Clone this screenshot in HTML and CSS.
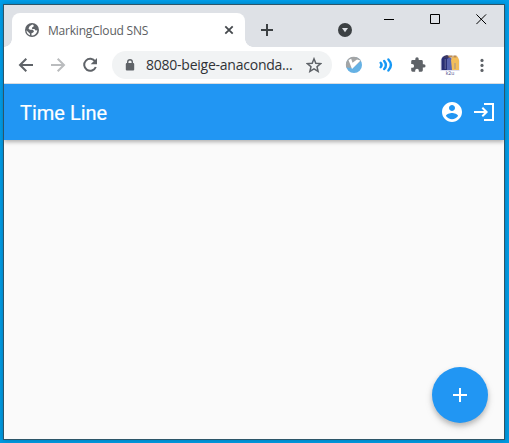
FILE: index.html
```html
<!DOCTYPE html>
<html lang="en">
<head>
<meta charset="utf-8">
<title>MarkingCloud SNS</title>
<link rel="stylesheet" href="styles.css">
</head>
<body>
<div class="window">
  <div class="tabstrip">
    <div class="tab">
      <svg class="favicon" width="16" height="16" viewBox="0 0 16 16"><circle cx="8" cy="8" r="7" fill="#5f6368"/><path d="M8.2 2.600 5.600 4.200 4.500 6.400l1.300 1.400h3l1.200 1.400-.8 1.300-1.700.7v2.300c3.200 0 5.700-2.400 5.800-5.300l-1.700.2-1.200-1.500H8.100V5.500l1.700-1.200-.3-1.200zM2.400 8.200c.1 2.600 1.500 4.400 3.600 5V11.800L4.700 10.400z" fill="#fff"/></svg>
      <span class="tab-title">MarkingCloud SNS</span>
      <svg class="tab-close" width="10" height="10" viewBox="0 0 10 10"><path d="m1.300 1.300 7.400 7.400m0-7.400L1.300 8.700" stroke="#45494d" stroke-width="1.800"/></svg>
      <i class="tab-foot tab-foot-left"></i>
      <i class="tab-foot tab-foot-right"></i>
    </div>
    <svg class="new-tab" width="12" height="12" viewBox="0 0 12 12"><path d="M6 0v12M0 6h12" stroke="#3c4043" stroke-width="2"/></svg>
    <svg class="tab-search" width="14" height="14" viewBox="0 0 14 14"><circle cx="7" cy="7" r="7" fill="#3c4043"/><path d="M4 5h6L7 9.300z" fill="#dee1e6"/></svg>
    <div class="controls">
      <svg width="11" height="11" viewBox="0 0 11 11"><path d="M0 5.500h10" stroke="#000"/></svg>
      <svg width="11" height="11" viewBox="0 0 11 11"><path d="M.5.500h9v9h-9z" fill="none" stroke="#000"/></svg>
      <svg width="11" height="11" viewBox="0 0 11 11"><path d="m.4.400 9.700 9.700m0-9.700L.4 10.100" stroke="#000"/></svg>
    </div>
  </div>
  <div class="toolbar">
    <div class="nav">
      <svg width="20" height="20" viewBox="0 0 20 20"><path d="M17 10H4m6.300-6.300L4 10l6.300 6.300" fill="none" stroke="#5f6368" stroke-width="2"/></svg>
      <svg width="20" height="20" viewBox="0 0 20 20"><path d="M3 10h13M9.700 3.700 16 10l-6.300 6.300" fill="none" stroke="#babcbe" stroke-width="2"/></svg>
      <svg width="20" height="20" viewBox="0 0 20 20"><path d="M15.200 6.500A6 6 0 1 0 15.800 12" fill="none" stroke="#5f6368" stroke-width="2"/><path d="M17 3v6.300h-6.300z" fill="#5f6368"/></svg>
    </div>
    <div class="omnibox">
      <svg width="10" height="12" viewBox="0 0 10 12"><path d="M2.700 5V3a2.300 2.300 0 0 1 4.600 0v2" fill="none" stroke="#5f6368" stroke-width="1.400"/><rect x=".8" y="4" width="8.400" height="7.500" rx="1" fill="#5f6368"/></svg>
      <span class="url">8080-beige-anaconda...</span>
      <svg width="16" height="16" viewBox="0 0 16 16"><path d="m8 1.800 1.800 4.400 4.800.4-3.600 3.100 1.100 4.600L8 11.800l-4.100 2.500L5 9.700 1.400 6.600l4.800-.4z" fill="none" stroke="#5f6368" stroke-width="1.500"/></svg>
    </div>
    <div class="extensions">
      <svg width="20" height="20" viewBox="0 0 20 20"><circle cx="10" cy="10" r="8" fill="#65b1e4"/><path d="M2 11a8 8 0 0 1 15-5L8.500 13 2.200 12.500z" fill="#a3a5a6"/><path d="m4.500 5 2.700-1.200 1.300 4L13 4.500l3.500 1L8 14z" fill="#fff"/></svg>
      <svg width="20" height="20" viewBox="0 0 20 20" fill="none" stroke="#1698f5" stroke-width="2.400" stroke-linecap="round"><path d="M4.600 7.800q2 2.200 0 4.400M8.200 5.900q3.400 4.100 0 8.200M12.400 4.500q5 5.500 0 11"/></svg>
      <svg width="20" height="20" viewBox="0 0 24 24"><path transform="translate(2.200 2) scale(.82)" d="M20.500 11H19V7a2 2 0 0 0-2-2h-4V3.500a2.500 2.500 0 0 0-5 0V5H4a2 2 0 0 0-2 2v3.800h1.500a2.700 2.700 0 0 1 0 5.400H2V20a2 2 0 0 0 2 2h3.800v-1.500a2.700 2.700 0 0 1 5.400 0V22H17a2 2 0 0 0 2-2v-4h1.500a2.500 2.500 0 0 0 0-5z" fill="#5f6368"/></svg>
      <div class="avatar">
        <svg width="20" height="17" viewBox="0 0 20 17"><path d="M.5 17V7q1-5 5-5.500h9q4 .5 5 5.500v10z" fill="#dedff0"/><path d="M1.500 16V5L3 2.500h7V16z" fill="#292e73"/><path d="M7 16V5l3-2 2 2v11z" fill="#5963ae"/><path d="M12 16 11 6l1.500-3.500h5L19 6v10z" fill="#f3bd59"/><path d="m4 2 3-1 2 1v2H4z" fill="#3d3862"/><path d="M8.500 1.500h4v2h-4zM13.500 1.500h3v2h-3z" fill="#bc8c52"/><path d="M5.200 5v10M15 9v6" stroke="#8083a8" stroke-width=".7"/></svg>
        <span>k2u</span>
      </div>
      <svg width="20" height="20" viewBox="0 0 20 20" fill="#5f6368"><circle cx="10" cy="5.400" r="1.600"/><circle cx="10" cy="10.400" r="1.600"/><circle cx="10" cy="15.400" r="1.600"/></svg>
    </div>
  </div>
  <header class="appbar">
    <h1>Time Line</h1>
    <svg width="24" height="24" viewBox="0 0 24 24"><path fill="#fff" d="M12 2C6.480 2 2 6.480 2 12s4.480 10 10 10 10-4.480 10-10S17.520 2 12 2zm0 3c1.660 0 3 1.340 3 3s-1.340 3-3 3-3-1.340-3-3 1.340-3 3-3zm0 14.200c-2.500 0-4.710-1.280-6-3.220.030-1.990 4-3.080 6-3.080 1.990 0 5.970 1.090 6 3.080-1.290 1.940-3.500 3.220-6 3.220z"/></svg>
    <svg width="24" height="24" viewBox="0 0 24 24"><path d="M12 4h9v16h-9M2 12h13M10.300 7.700 14.600 12l-4.300 4.300" fill="none" stroke="#fff" stroke-width="2"/></svg>
  </header>
  <main class="content">
    <button class="fab" aria-label="Add"><svg width="24" height="24" viewBox="0 0 24 24"><path d="M12 5v14M5 12h14" stroke="#fff" stroke-width="2"/></svg></button>
  </main>
</div>
</body>
</html>
```

FILE: styles.css
```css
* { box-sizing: border-box; }
body {
  margin: 0;
  height: 443px;
  padding: 4px 4px 3px 3px;
  background: linear-gradient(#009fea, #009be2);
  overflow: hidden;
}
svg { display: block; flex: none; }
.window {
  display: flex;
  flex-direction: column;
  width: 502px;
  height: 436px;
  border: 1px solid #2d5568;
  background: #fafafa;
  box-shadow: 0 0 5px rgba(0, 35, 65, .3);
}
.tabstrip {
  display: flex;
  height: 42px;
  background: #dee1e6;
}
.tab {
  position: relative;
  display: flex;
  align-items: center;
  width: 233px;
  height: 34px;
  margin: 8px 0 0 8px;
  padding: 0 11px 0 12px;
  border-radius: 8px 8px 0 0;
  background: #fff;
}
.tab-foot {
  position: absolute;
  bottom: 0;
  width: 8px;
  height: 8px;
}
.tab-foot-left {
  left: -8px;
  background: radial-gradient(circle at 0 0, transparent 7.5px, #fff 8px);
}
.tab-foot-right {
  right: -8px;
  background: radial-gradient(circle at 100% 0, transparent 7.5px, #fff 8px);
}
.tab-title {
  flex: 1;
  margin-left: 8px;
  padding-top: 2px;
  font: 12px/16px "Open Sans", "Noto Sans", sans-serif;
  letter-spacing: -.2px;
  color: #5b5e62;
  white-space: nowrap;
}
.new-tab { margin: 19px 0 0 16px; }
.tab-search { margin: 18px 0 0 65px; }
.controls {
  display: flex;
  gap: 35px;
  margin: 9px 0 0 32px;
}
.toolbar {
  display: flex;
  align-items: center;
  height: 37px;
  padding-left: 12px;
  border-bottom: 1px solid #d9dce0;
  background: #fff;
}
.nav, .extensions {
  display: flex;
  align-items: center;
  gap: 12px;
}
.omnibox {
  display: flex;
  align-items: center;
  width: 220px;
  height: 28px;
  margin: 0 12px;
  padding: 0 10px 0 13px;
  border-radius: 14px;
  background: #f1f3f4;
}
.url {
  flex: 1;
  margin-left: 11px;
  font: 14px/20px "Open Sans", "Noto Sans", sans-serif;
  letter-spacing: -.24px;
  color: #303236;
  white-space: nowrap;
}
.avatar {
  width: 20px;
  height: 22px;
}
.avatar span {
  display: block;
  font: 5px/5px "Open Sans", sans-serif;
  text-align: center;
  color: #494989;
}
.appbar {
  display: flex;
  align-items: center;
  gap: 8px;
  height: 56px;
  padding: 0 8px 0 16px;
  background: #2196f3;
  box-shadow: 0 2px 4px rgba(0, 0, 0, .3);
  clip-path: inset(0 0 -8px 0);
  z-index: 1;
}
.appbar h1 {
  flex: 1;
  margin: 0;
  padding-top: 1px;
  font: 400 20px/24px Roboto, sans-serif;
  -webkit-text-stroke: .2px #fff;
  color: #fff;
}
.content {
  display: flex;
  flex: 1;
  align-items: flex-end;
  justify-content: flex-end;
  padding: 16px;
}
.fab {
  display: grid;
  place-items: center;
  width: 56px;
  height: 56px;
  padding: 0;
  border: 0;
  border-radius: 50%;
  background: #2196f3;
  box-shadow: 0 3px 5px rgba(0, 0, 0, .2), 0 4px 8px rgba(0, 0, 0, .1);
}
```
